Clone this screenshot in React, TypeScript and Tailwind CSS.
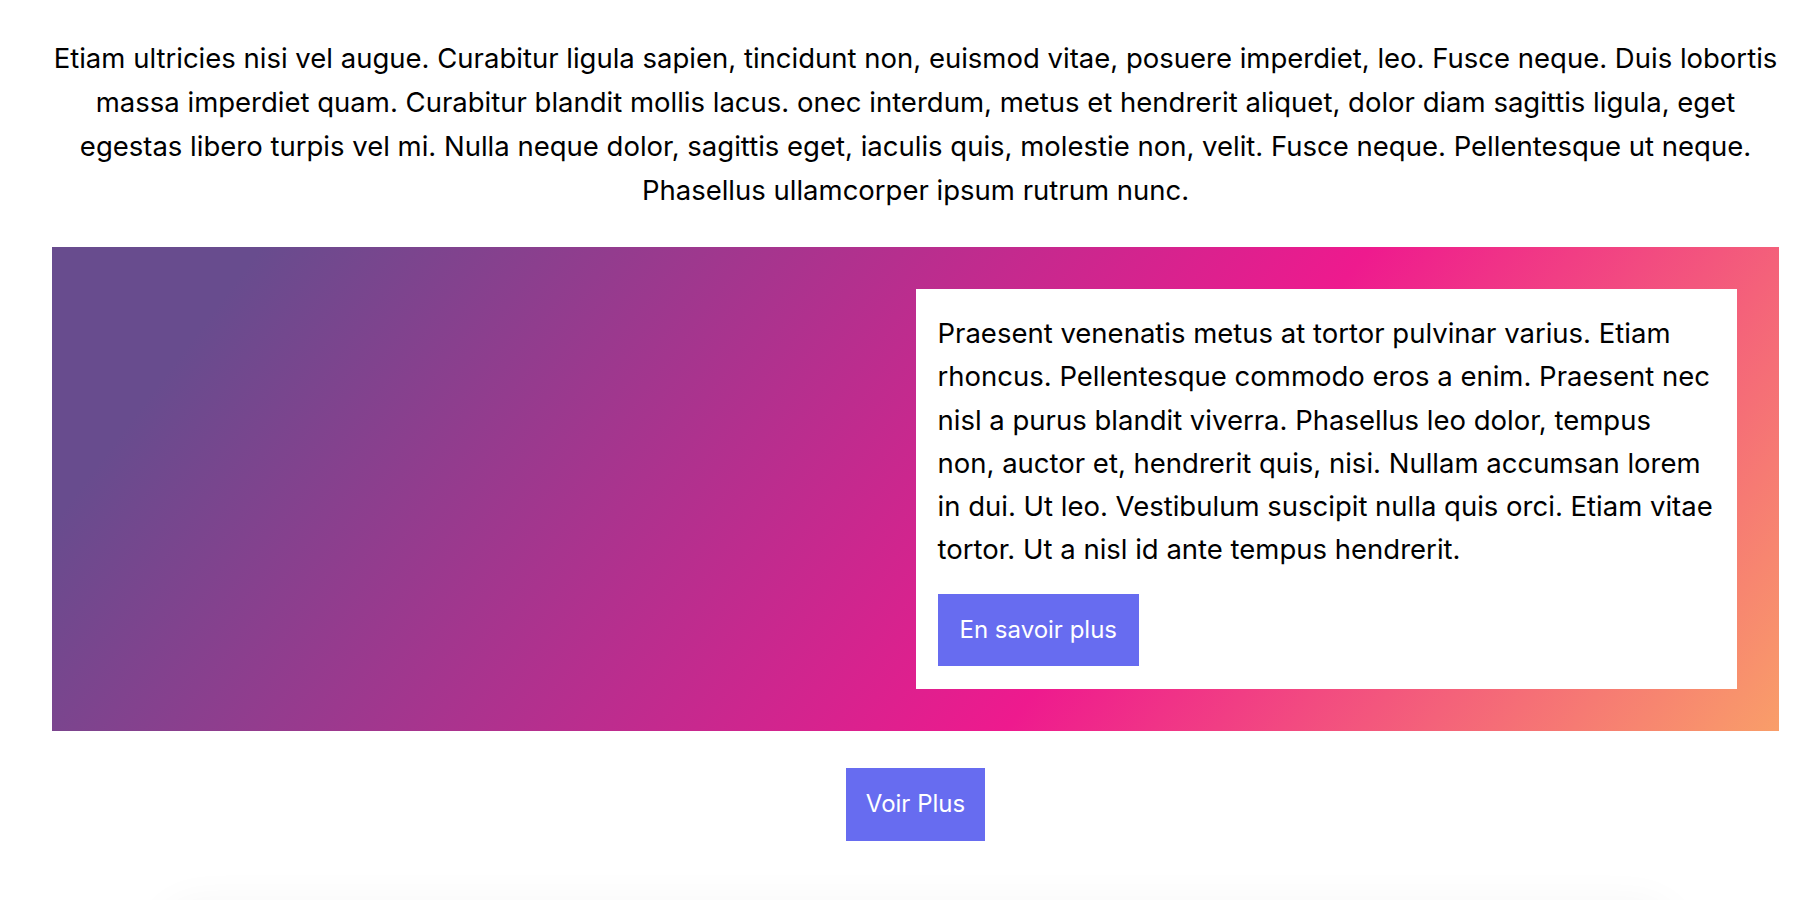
const App = () => {
  return (
    <div className="min-h-screen bg-white text-black font-['Inter','Noto_Sans',sans-serif] overflow-hidden">
      <div className="w-[1727px] ml-[52px]">
        <p className="pt-[36px] text-center text-[27.5px] leading-[44px]">
          Etiam ultricies nisi vel augue. Curabitur ligula sapien, tincidunt non, euismod vitae, posuere imperdiet, leo. Fusce neque. Duis lobortis massa imperdiet quam. Curabitur blandit mollis lacus. onec interdum, metus et hendrerit aliquet, dolor diam sagittis ligula, eget egestas libero turpis vel mi. Nulla neque dolor, sagittis eget, iaculis quis, molestie non, velit. Fusce neque. Pellentesque ut neque. Phasellus ullamcorper ipsum rutrum nunc.
        </p>

        {/* gradient banner */}
        <section className="mt-[35px] grid grid-cols-2 p-[42px] bg-[linear-gradient(127deg,#684c8e_10%,#ee1a8e_63%,#f99e69_100%)]">
          <div />
          <div className="bg-white px-[22px] pt-[23px] pb-[23px]">
            <p className="text-[27.5px] leading-[43.3px]">
              Praesent venenatis metus at tortor pulvinar varius. Etiam rhoncus. Pellentesque commodo eros a enim. Praesent nec nisl a purus blandit viverra. Phasellus leo dolor, tempus non, auctor et, hendrerit quis, nisi. Nullam accumsan lorem in dui. Ut leo. Vestibulum suscipit nulla quis orci. Etiam vitae tortor. Ut a nisl id ante tempus hendrerit.
            </p>
            <button className="mt-[22px] bg-[#676cf0] text-white text-[24px] leading-[44px] px-[22px] py-[14px]">
              En savoir plus
            </button>
          </div>
        </section>

        <div className="flex justify-center mt-[37px]">
          <button className="bg-[#676cf0] text-white text-[24px] leading-[44px] px-[20px] py-[14.5px]">
            Voir Plus
          </button>
        </div>
      </div>

      {/* next card peeking in at the bottom */}
      <div className="mt-[60px] w-[1520px] h-[200px] ml-[158px] rounded-[40px] bg-white shadow-[0_0_40px_rgba(0,0,0,0.04)]" />
    </div>
  );
};

export default App;
